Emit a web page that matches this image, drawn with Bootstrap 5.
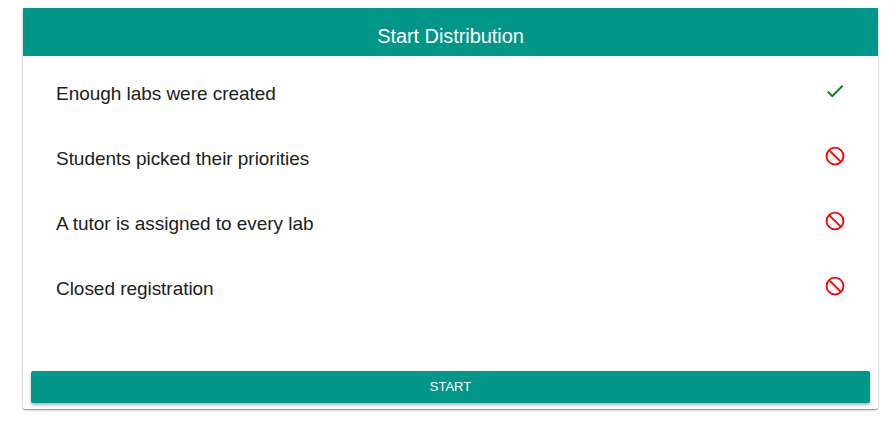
<!DOCTYPE html>
<html lang="en">
<head>
<meta charset="utf-8">
<title>Start Distribution</title>
<link rel="stylesheet" href="https://cdn.jsdelivr.net/npm/bootstrap@5.3.0/dist/css/bootstrap.min.css">
<style>
body { font-family: "Liberation Sans", Arial, sans-serif; background: #fff; color: #212121; min-height: 425px; padding: 8px 0 0 23px; }
.panel { width: 855px; height: 401px; border-radius: 0 0 2px 2px; box-shadow: 0 1px 1px rgba(0,0,0,.3), 0 1px 3px rgba(0,0,0,.25); }
.panel-title { height: 48px; padding-top: 16px; background: #009688; font-size: 20px; line-height: 24px; letter-spacing: -.07px; }
.checks { padding: 5px 33px 0; }
.check-row { height: 65px; font-size: 19px; line-height: 24px; letter-spacing: -.04px; }
.check-row svg { width: 22px; height: 22px; margin-right: -.5px; margin-bottom: 6px; }
.start-btn { height: 32px; margin: 0 8px 6px; background: #009688; color: #fff; font-size: 13px; line-height: 15px; border: 0; border-radius: 2px; padding: 0 0 2px; box-shadow: 0 2px 3px rgba(0,0,0,.3); }
.ok { fill: #0a7d18; }
.no { fill: none; stroke: #f00; stroke-width: 2; }
</style>
</head>
<body>
<svg class="d-none">
<symbol id="i-ok" viewBox="0 0 24 24"><path d="M9 16.17 4.83 12l-1.42 1.41L9 19 21 7l-1.41-1.41z"/></symbol>
<symbol id="i-no" viewBox="0 0 24 24"><circle cx="12" cy="12" r="9.2"/><path d="M5.5 5.5l13 13"/></symbol>
</svg>
<main class="panel d-flex flex-column">
<header class="panel-title d-flex align-items-start justify-content-center text-white">Start Distribution</header>
<div class="checks flex-grow-1">
<div class="check-row d-flex align-items-center justify-content-between"><span>Enough labs were created</span><svg class="ok"><use href="#i-ok"/></svg></div>
<div class="check-row d-flex align-items-center justify-content-between"><span>Students picked their priorities</span><svg class="no"><use href="#i-no"/></svg></div>
<div class="check-row d-flex align-items-center justify-content-between"><span>A tutor is assigned to every lab</span><svg class="no"><use href="#i-no"/></svg></div>
<div class="check-row d-flex align-items-center justify-content-between"><span>Closed registration</span><svg class="no"><use href="#i-no"/></svg></div>
</div>
<button type="button" class="btn start-btn">START</button>
</main>
<script src="https://cdn.jsdelivr.net/npm/bootstrap@5.3.0/dist/js/bootstrap.bundle.min.js"></script>
</body>
</html>
